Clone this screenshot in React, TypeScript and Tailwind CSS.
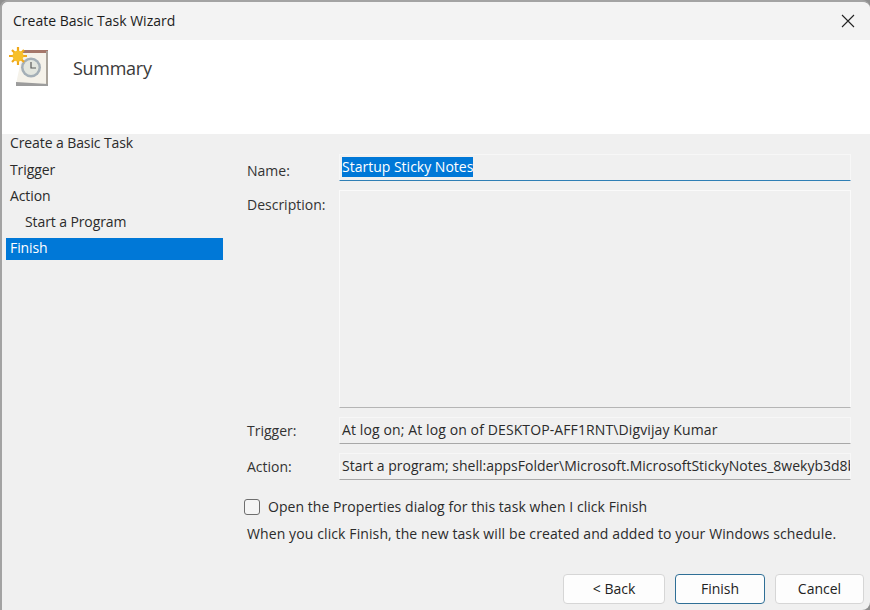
import React from "react";

const FONT = "font-['Open_Sans','Noto_Sans',sans-serif]";

const STEPS = [
  { label: "Create a Basic Task", first: true },
  { label: "Trigger" },
  { label: "Action" },
  { label: "Start a Program", indent: true },
  { label: "Finish", active: true },
];

// ---- scheduler icon: calendar page, clock and sun
function TaskIcon() {
  return (
    <svg width="42" height="42" viewBox="0 0 42 42" className="block">
      <path d="M7 38 L39 38 L39 5 L14 5 Z" fill="#f5f2ea" />
      <rect x="14" y="4" width="25" height="3" fill="#a5776a" />
      <rect x="37" y="5" width="2" height="34" fill="#a9a39a" />
      <path d="M7 36 L7 40 L39 40 L39 38 Z" fill="#9c9c9c" />
      <circle cx="22" cy="21.5" r="10" fill="#a4afb7" />
      <circle cx="22" cy="21.5" r="7.5" fill="#e3e6df" />
      <path d="M22 16 L22 22 L27 22" fill="none" stroke="#5a5a5a" strokeWidth="1.2" />
      <g stroke="#f0a818" strokeWidth="2.2">
        <path d="M9 1 L9 19" />
        <path d="M0 10 L18 10" />
        <path d="M3 4 L15 16" />
        <path d="M15 4 L3 16" />
      </g>
      <circle cx="9" cy="10" r="5.5" fill="#f7c02c" />
    </svg>
  );
}

function Field({ label, value, tracking }: { label: string; value: string; tracking?: string }) {
  return (
    <div className="flex items-center">
      <span className="w-[92px] text-[#333]">{label}</span>
      <div className={`flex h-[27px] w-[512px] items-center overflow-hidden whitespace-nowrap border border-[#f7f7f7] border-b-[#a8a8a8] bg-[#f0f0f0] pb-[2px] pl-[2px] ${tracking ?? ""}`}>
        {value}
      </div>
    </div>
  );
}

function WizardButton({ label, width, focused }: { label: string; width: string; focused?: boolean }) {
  return (
    <button
      className={`h-[30px] rounded-[4px] border bg-[#fdfdfd] text-[#222] ${width} ${
        focused ? "border-[#2f6f96]" : "border-[#d6d6d6]"
      }`}
    >
      {label}
    </button>
  );
}

export default function App() {
  return (
    <div className="h-[610px] w-[870px] bg-[#8f8f8f]">
      <div className={`flex h-[610px] w-[870px] flex-col overflow-hidden rounded-t-[8px] rounded-br-[8px] border-l-2 border-t-2 border-[#a3a3a3] bg-[#f0f0f0] text-[14px] leading-[20px] text-[#2b2b2b] ${FONT}`}>
        {/* Title bar */}
        <div className="flex h-[38px] shrink-0 items-center justify-between bg-[#f3f3f3] pl-[11px] pr-[15px]">
          <span className="text-[14px] text-[#1c1c1c]">Create Basic Task Wizard</span>
          <svg width="14" height="14" viewBox="0 0 14 14">
            <path d="M1 1 L13 13 M13 1 L1 13" stroke="#222" strokeWidth="1.1" />
          </svg>
        </div>

        {/* Header */}
        <div className="flex h-[94px] shrink-0 items-start bg-white">
          <div className="ml-[7px] mt-[6px]">
            <TaskIcon />
          </div>
          <span className="ml-[22px] mt-[16px] text-[18px] leading-[24px] tracking-[-0.28px] text-[#3a3a3a]">Summary</span>
        </div>

        <div className="flex min-h-0 flex-1">
          {/* Steps */}
          <div className="flex w-[221px] shrink-0 flex-col pl-[4px] tracking-[-0.1px]">
            {STEPS.map((s) => (
              <div
                key={s.label}
                className={`mb-[4px] flex h-[22px] items-center ${s.first ? "pb-[4px]" : "pb-[2px]"} ${
                  s.indent ? "pl-[19px]" : "pl-[4px]"
                } ${s.active ? "bg-[#0078d7] text-white" : ""}`}
              >
                {s.label}
              </div>
            ))}
          </div>

          {/* Form */}
          <div className="flex flex-1 flex-col pl-[24px] pt-[20px]">
            <div className="flex items-center">
              <span className="w-[92px] pt-[6px] text-[#333]">Name:</span>
              <div className="flex h-[27px] w-[512px] items-center border border-[#f7f7f7] border-b-[#2f7fb5] bg-[#f0f0f0] pb-[2px] pl-[2px]">
                <span className="bg-[#0078d7] text-white">Startup Sticky Notes</span>
              </div>
            </div>
            <div className="mt-[9px] flex">
              <span className="w-[92px] pt-[5px] text-[#333]">Description:</span>
              <div className="h-[218px] w-[512px] border border-[#fafafa] border-b-[#b5b5b5] bg-[#f0f0f0]" />
            </div>
            <div className="mt-[9px] flex flex-col gap-[9px]">
              <Field label="Trigger:" value="At log on; At log on of DESKTOP-AFF1RNT\Digvijay Kumar" tracking="tracking-[0.11px]" />
              <Field label="Action:" value="Start a program; shell:appsFolder\Microsoft.MicrosoftStickyNotes_8wekyb3d8bbwe!App" />
            </div>
            <label className="ml-[-3px] mt-[17px] flex items-center">
              <span className="h-[16px] w-[16px] rounded-[3px] border border-[#6e6e6e] bg-[#f5f5f5]" />
              <span className="ml-[8px] tracking-[0.05px]">Open the Properties dialog for this task when I click Finish</span>
            </label>
            <p className="mt-[7px] whitespace-nowrap tracking-[0.105px]">When you click Finish, the new task will be created and added to your Windows schedule.</p>
            <div className="mt-[30px] flex justify-end gap-[10px] pr-[6px]">
              <WizardButton label="< Back" width="w-[102px]" />
              <WizardButton label="Finish" width="w-[90px]" focused />
              <WizardButton label="Cancel" width="w-[89px]" />
            </div>
          </div>
        </div>
      </div>
    </div>
  );
}
